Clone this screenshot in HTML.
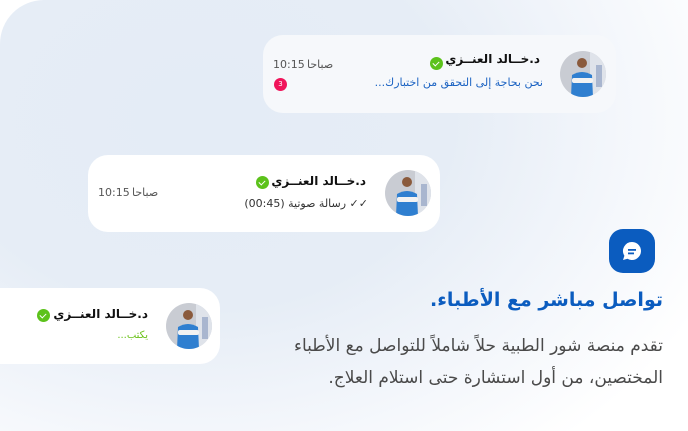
<!DOCTYPE html>
<html><head><meta charset="utf-8"><style>
*{margin:0;padding:0;box-sizing:border-box}
body{width:688px;height:431px;overflow:hidden;background:#fff;position:relative;font-family:"DejaVu Sans","Liberation Sans",sans-serif;direction:rtl}
.bg{position:absolute;left:0;top:0;width:688px;height:431px;border-top-left-radius:44px;background:radial-gradient(ellipse 560px 420px at 200px 120px,#e4ecf6 0%,#e6edf6 45%,rgba(240,244,250,.9) 70%,#fff 100%)}
.card{position:absolute;border-radius:20px;background:#fff}
.av{position:absolute;width:46px;height:46px;border-radius:50%;overflow:hidden}
.t{position:absolute;white-space:nowrap}
.name{font-size:12px;font-weight:bold;color:#111}
.chk{position:absolute;width:13px;height:13px;border-radius:50%;background:#5cc21b}
.chk:after{content:"";position:absolute;left:4px;top:2.5px;width:3px;height:5px;border:solid #fff;border-width:0 1.5px 1.5px 0;transform:rotate(45deg)}
.time{font-size:11px;color:#555}
</style></head><body>
<div class="bg"></div>

<svg width="0" height="0" style="position:absolute"><defs>
<g id="doc"><rect width="46" height="46" fill="#c9ccd3"/><rect x="30" y="0" width="16" height="46" fill="#dfe3ea"/><rect x="36" y="14" width="6" height="22" fill="#a9b6cf"/><circle cx="22" cy="12" r="5" fill="#8a5a3c"/><path d="M11 46 L12 24 Q22 18 32 24 L33 46Z" fill="#2f7fd0"/><rect x="12" y="27" width="21" height="5" rx="2" fill="#f2f2f2"/></g>
</defs></svg>

<div class="card" style="left:263px;top:35px;width:353px;height:78px;background:#f6f8fb"></div>
<div class="av" style="left:560px;top:51px"><svg width="46" height="46"><use href="#doc"/></svg></div>
<div class="t name" style="right:148px;top:52px">د.خــالد العنــزي</div>
<div class="chk" style="left:430px;top:57px"></div>
<div class="t" style="right:145px;top:76px;font-size:11px;color:#1a62c2">نحن بحاجة إلى التحقق من اختبارك...</div>
<div class="t time" style="left:273px;top:58px">10:15</div><div class="t time" style="left:307px;top:58px">صباحا</div>
<div style="position:absolute;left:274px;top:78px;width:13px;height:13px;border-radius:50%;background:#f0145a;color:#fff;font-size:7px;text-align:center;line-height:13px">3</div>

<div class="card" style="left:88px;top:155px;width:352px;height:77px"></div>
<div class="av" style="left:385px;top:170px"><svg width="46" height="46"><use href="#doc"/></svg></div>
<div class="t name" style="right:322px;top:174px">د.خــالد العنــزي</div>
<div class="chk" style="left:256px;top:176px"></div>
<div class="t" style="right:320px;top:197px;font-size:11px;color:#333">✓✓ رسالة صوتية (00:45)</div>
<div class="t time" style="left:98px;top:186px">10:15</div><div class="t time" style="left:132px;top:186px">صباحا</div>

<div class="card" style="left:-20px;top:288px;width:240px;height:76px"></div>
<div class="av" style="left:166px;top:303px"><svg width="46" height="46"><use href="#doc"/></svg></div>
<div class="t name" style="right:540px;top:307px">د.خــالد العنــزي</div>
<div class="chk" style="left:37px;top:309px"></div>
<div class="t" style="right:540px;top:330px;font-size:10px;color:#6cc21b">يكتب...</div>

<div style="position:absolute;left:609px;top:229px;width:46px;height:44px;border-radius:14px;background:#0b5cbf">
<svg width="46" height="44"><path d="M23 13a9 9 0 1 1-4.5 16.8L14 31l1.4-4.2A9 9 0 0 1 23 13z" fill="#fff"/><rect x="19" y="20" width="8" height="1.8" fill="#0b5cbf"/><rect x="19" y="23.5" width="6" height="1.8" fill="#0b5cbf"/></svg></div>
<div class="t" style="right:25px;top:289px;font-size:19px;font-weight:bold;color:#0b5cbf">تواصل مباشر مع الأطباء.</div>
<div class="t" style="right:25px;top:336px;font-size:17px;color:#4a4a4a">تقدم منصة شور الطبية حلاً شاملاً للتواصل مع الأطباء</div>
<div class="t" style="right:25px;top:368px;font-size:17px;color:#4a4a4a">المختصين، من أول استشارة حتى استلام العلاج.</div>
</body></html>
